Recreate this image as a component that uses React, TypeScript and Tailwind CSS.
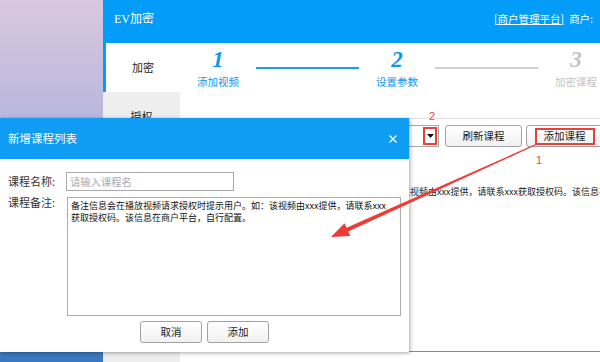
import { useState } from "react";

const NOTE =
  "备注信息会在播放视频请求授权时提示用户。如：该视频由xxx提供，请联系xxx获取授权码。该信息在商户平台，自行配置。";

const STEPS = [
  { n: "1", label: "添加视频", done: true },
  { n: "2", label: "设置参数", done: true },
  { n: "3", label: "加密课程", done: false },
];

export default function App() {
  return (
    <div className="relative flex h-[362px] w-[600px] overflow-hidden bg-white font-['Noto_Sans_CJK_SC',sans-serif] text-[#333]">
      <div className="flex w-[103px] shrink-0 flex-col">
        <div className="flex-1 bg-[linear-gradient(180deg,#d9c8de_0%,#b8b6dd_35%,#93a2d2_100%)]" />
        <div className="h-[10px] bg-[#3a79bf]" />
      </div>
      <AppWindow />
      <AddCourseDialog />
      <Annotations />
    </div>
  );
}

function AppWindow() {
  return (
    <div className="flex w-[507px] shrink-0 flex-col">
      <header className="flex h-[43px] shrink-0 items-center bg-[#039cf8] pb-[6px] pl-[11px] whitespace-nowrap text-white">
        <span className="text-[12px]">
          <span className="font-['Liberation_Serif',serif]">EV</span>加密
        </span>
        <a className="ml-[340px] text-[10.5px] underline">[商户管理平台]</a>
        <span className="ml-[5px] text-[10.5px]">商户:</span>
      </header>
      <div className="flex flex-1">
        <nav className="flex w-[77px] shrink-0 flex-col bg-[#eeeeee] text-[11px] text-[#222]">
          <div className="flex h-[49px] items-center justify-center border-l-[3px] border-[#039cf8] bg-white">加密</div>
          <div className="flex h-[49px] items-center justify-center">授权</div>
        </nav>
        <main className="flex w-[430px] shrink-0 flex-col bg-white">
          <div className="flex-1 border-b border-[#8a8a8a]">
            <Steps />
            <div className="mt-[6px] flex h-[22px] justify-end gap-[4px] pr-[7px]">
              <div className="mr-[2px] flex w-[120px] items-center justify-end border border-[#a8a8a8] bg-white pr-[1px]">
                <span className="flex h-[18px] w-[14px] items-center justify-center border-2 border-[#e8403c]">
                  <svg width="7" height="4" viewBox="0 0 7 4">
                    <path d="M0 0h7L3.5 4z" fill="#111" />
                  </svg>
                </span>
              </div>
              <Btn>刷新课程</Btn>
              <Btn>
                <span className="flex h-[17px] w-[60px] items-center justify-center border-2 border-[#e8403c]">添加课程</span>
              </Btn>
            </div>
            <p className="mt-[39px] overflow-hidden pl-[23px] text-[9px] leading-[12px] whitespace-nowrap text-[#222]">{NOTE}</p>
          </div>
          <div className="h-[10px] shrink-0" />
        </main>
      </div>
    </div>
  );
}

function Steps() {
  return (
    <div className="flex h-[76px] items-start border-b border-[#e0e0e0]">
      {STEPS.map((step, i) => (
        <div key={step.n} className="flex items-start">
          {i > 0 ? (
            <div className={`mt-[24px] h-[2px] w-[103px] ${step.done ? "bg-[#1a9cf0]" : "bg-[#cfcfcf]"}`} />
          ) : null}
          <div className={`flex w-[76px] flex-col items-center ${step.done ? "text-[#1196ee]" : "text-[#c4c4c4]"}`}>
            <span className="mt-[5px] font-['Liberation_Serif',serif] text-[23px] leading-[24px] font-bold italic">{step.n}</span>
            <span className="mt-[4px] text-[10.5px] leading-[12px]">{step.label}</span>
          </div>
        </div>
      ))}
    </div>
  );
}

function AddCourseDialog() {
  const [name, setName] = useState("");
  return (
    <div className="absolute top-[118px] left-0 flex h-[234px] w-[409px] flex-col bg-white shadow-[1px_1px_4px_rgba(0,0,0,0.35)]">
      <div className="flex h-[41px] shrink-0 items-center justify-between bg-[#0e9df3] pr-[12px] pl-[8px] text-[11.5px] text-white">
        新增课程列表
        <svg width="8" height="8" viewBox="0 0 8 8">
          <path d="M0.5 0.5l7 7M7.5 0.5l-7 7" stroke="#fff" strokeWidth="1.2" />
        </svg>
      </div>
      <div className="flex flex-col pt-[13px] pl-[8px]">
        <label className="flex h-[19px] items-center">
          <span className="w-[58px] text-[11px]">课程名称:</span>
          <input
            value={name}
            onChange={(e) => setName(e.target.value)}
            placeholder="请输入课程名"
            className="h-[19px] w-[168px] border border-[#a9a9a9] px-[3px] text-[10.3px] placeholder:text-[#a9a9a9] focus:outline-none"
          />
        </label>
        <label className="mt-[6px] flex items-start">
          <span className="mt-[-1px] w-[59px] text-[11px] leading-[13px]">课程备注:</span>
          <textarea
            defaultValue={
              "备注信息会在播放视频请求授权时提示用户。如：该视频由xxx提供，请联系xxx\n获取授权码。该信息在商户平台，自行配置。"
            }
            className="h-[119px] w-[334px] resize-none border border-[#adadad] px-[3px] pt-[2px] text-[9px] leading-[12px] text-[#111] focus:outline-none"
          />
        </label>
      </div>
      <div className="mt-[5px] flex justify-center gap-[5px]">
        <Btn wide>取消</Btn>
        <Btn wide>添加</Btn>
      </div>
    </div>
  );
}

function Btn({ children, wide }: { children: React.ReactNode; wide?: boolean }) {
  return (
    <button
      type="button"
      className={`flex h-[22px] shrink-0 items-center justify-center rounded-[3px] border border-[#a2a2a2] bg-[linear-gradient(#ffffff,#f1f1f1)] text-[10.5px] text-[#222] ${
        wide ? "w-[62px]" : "w-[77px]"
      }`}
    >
      {children}
    </button>
  );
}

function Annotations() {
  return (
    <>
      <svg className="pointer-events-none absolute inset-0" width="600" height="362" viewBox="0 0 600 362">
        <polygon
          points="331,237 350.3,236 348.2,231.4 537.2,144.5 536.8,143.5 346.6,227.8 344.5,223.2"
          fill="#ee3b36"
        />
      </svg>
      <span className="absolute top-[111px] left-[429px] font-['Liberation_Sans',sans-serif] text-[11px] leading-[11px] text-[#ee4444]">2</span>
      <span className="absolute top-[155px] left-[536px] font-['Liberation_Sans',sans-serif] text-[11px] leading-[11px] text-[#ee4444]">1</span>
    </>
  );
}
